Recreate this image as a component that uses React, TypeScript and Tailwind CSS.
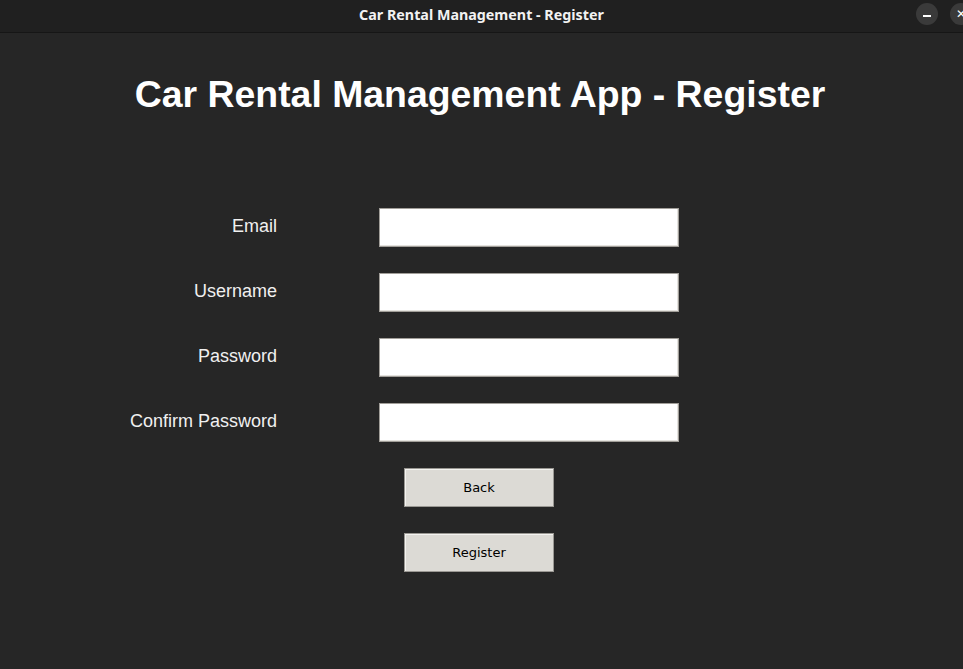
import React, { useState } from 'react';

const FIELDS = ['Email', 'Username', 'Password', 'Confirm Password'];

const App: React.FC = () => {
  const [values, setValues] = useState<Record<string, string>>({});

  return (
    <div className="w-[963px] h-[669px] bg-[#262626] flex flex-col overflow-hidden" style={{ fontFamily: '"Liberation Sans", Arial, sans-serif' }}>
      {/* Window title bar */}
      <div className="h-[33px] shrink-0 bg-[#202020] border-b border-[#161616] flex items-center relative">
        <div className="flex-1 text-center text-[14.3px] font-bold text-[#f2f2f2] font-['Noto_Sans',sans-serif] pb-[3px]">
          Car Rental Management - Register
        </div>
        <div className="absolute left-[916px] top-[3px] flex gap-[12px]">
          <div className="w-[22px] h-[22px] rounded-full bg-[#3a3a3a] flex items-center justify-center">
            <div className="w-[8px] h-[1.5px] bg-white mt-[4px]" />
          </div>
          <div className="w-[22px] h-[22px] rounded-full bg-[#3a3a3a] flex items-center justify-center text-white text-[12px] leading-none">
            ✕
          </div>
        </div>
      </div>

      {/* Heading */}
      <h1 className="mt-[40px] text-center text-[37.4px] leading-[42px] font-bold text-white pr-[3px]">
        Car Rental Management App - Register
      </h1>

      {/* Form */}
      <div className="mt-[93px] flex flex-col gap-[26px]">
        {FIELDS.map((label) => (
          <div key={label} className="flex items-center">
            <label className="w-[277px] text-right text-[18px] text-[#f0f0f0] pb-[3px]">{label}</label>
            <input
              type={label.includes('Password') ? 'password' : 'text'}
              value={values[label] || ''}
              onChange={(e) => setValues({ ...values, [label]: e.target.value })}
              className="ml-[102px] w-[300px] h-[39px] bg-white border border-[#a19e99] shadow-[inset_-1px_-1px_0_#e4e2de] outline-none px-1 text-black"
            />
          </div>
        ))}

        <button className="ml-[404px] w-[150px] h-[39px] bg-[#dcdad5] border border-[#9a9893] shadow-[inset_1px_1px_0_#f4f3f0] text-[13px] text-black font-['DejaVu_Sans',sans-serif]">
          Back
        </button>
        <button className="ml-[404px] w-[150px] h-[39px] bg-[#dcdad5] border border-[#9a9893] shadow-[inset_1px_1px_0_#f4f3f0] text-[13px] text-black font-['DejaVu_Sans',sans-serif]">
          Register
        </button>
      </div>
    </div>
  );
};

export default App;
